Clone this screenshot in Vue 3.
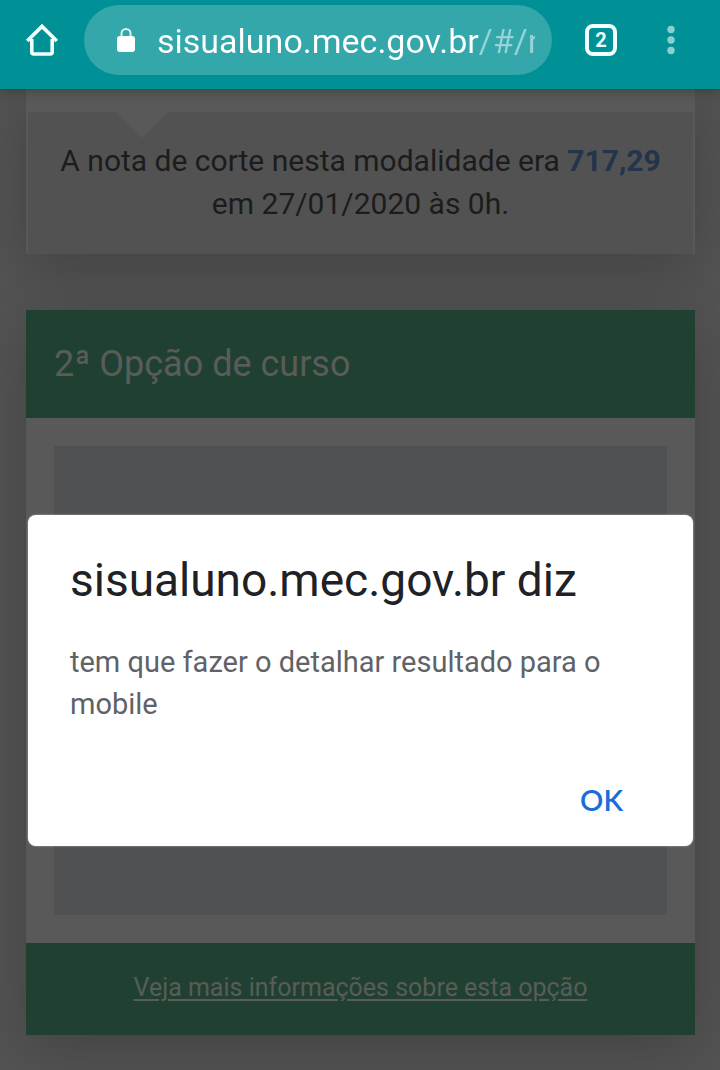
<template>
    <div class="screen">
        <!-- Browser toolbar -->
        <header class="toolbar">
            <button type="button" class="icon-button" aria-label="Página inicial">
                <svg width="34" height="34" viewBox="0 0 34 34" fill="none" stroke="#f2fffe" stroke-width="3.6" stroke-linejoin="round">
                    <path d="M6.8 16V29.5a1.5 1.5 0 0 0 1.5 1.5H25.7a1.5 1.5 0 0 0 1.5-1.5V16"/>
                    <path d="M2.2 18L17 3.4L31.8 18" stroke-linejoin="miter"/>
                </svg>
            </button>

            <div class="address-bar">
                <svg class="lock" width="18" height="24" viewBox="0 0 18 24">
                    <path d="M4.5 9V5.5a4.5 4.5 0 0 1 9 0V9" fill="none" stroke="#d9f1f1" stroke-width="2"/>
                    <rect x="0" y="8" width="18" height="16" rx="3" fill="#ffffff"/>
                </svg>
                <input v-model="url" class="url" type="text" aria-label="Endereço" spellcheck="false">
            </div>

            <button type="button" class="tabs" aria-label="Abas abertas">{{ openTabs }}</button>

            <button type="button" class="icon-button menu" aria-label="Mais opções">
                <svg width="8" height="30" viewBox="0 0 8 30" fill="#8bcfd2">
                    <circle cx="4" cy="4.5" r="3.7"/>
                    <circle cx="4" cy="15" r="3.7"/>
                    <circle cx="4" cy="25.5" r="3.7"/>
                </svg>
            </button>
        </header>

        <main class="content">
            <section class="card">
                <div class="card-tail"></div>
                <p class="cutoff">
                    A nota de corte nesta modalidade era <strong>717,29</strong> em 27/01/2020 às 0h.
                </p>
            </section>

            <section class="card option">
                <h2 class="option-title">2ª Opção de curso</h2>
                <div class="option-body">
                    <div class="placeholder"></div>
                </div>
                <footer class="option-footer">
                    <a href="#">Veja mais informações sobre esta opção</a>
                </footer>
            </section>

            <!-- Alert -->
            <div v-if="alertOpen" class="overlay">
                <div class="dialog" role="alertdialog" aria-labelledby="dialog-title" aria-describedby="dialog-text">
                    <h1 id="dialog-title" class="dialog-title">sisualuno.mec.gov.br diz</h1>
                    <p id="dialog-text" class="dialog-text">tem que fazer o detalhar resultado para o mobile</p>
                    <div class="dialog-actions">
                        <button type="button" class="ok" @click="alertOpen = false">OK</button>
                    </div>
                </div>
            </div>
        </main>
    </div>
</template>

<script setup>
import { ref } from 'vue';

const url = ref('sisualuno.mec.gov.br/#/n');
const openTabs = ref(2);
const alertOpen = ref(true);
</script>

<style>
body {
    margin: 0;
    background: #535353;
}
</style>

<style scoped>
.screen {
    min-height: 100vh;
    font-family: Roboto, sans-serif;
    display: flex;
    flex-direction: column;
}

button {
    border: none;
    background: none;
    padding: 0;
    font-family: inherit;
    cursor: pointer;
}

/* Toolbar */
.toolbar {
    position: relative;
    z-index: 2;
    display: flex;
    align-items: center;
    box-sizing: border-box;
    height: 89px;
    padding: 0 45px 9px 25px;
    background: #009197;
    box-shadow: 0 1px 12px rgba(0, 0, 0, 0.3);
}

.icon-button {
    display: flex;
    align-items: center;
    justify-content: center;
    flex-shrink: 0;
}

.address-bar {
    flex: 1;
    min-width: 0;
    display: flex;
    align-items: center;
    box-sizing: border-box;
    height: 70px;
    margin: 0 33px 0 25px;
    padding: 0 17px 0 33px;
    border-radius: 35px;
    background: #34a7ab;
}

.lock {
    flex-shrink: 0;
    margin-right: 22px;
}

.url {
    flex: 1;
    min-width: 0;
    height: 50px;
    padding: 2px 0 0;
    border: none;
    outline: none;
    font-family: inherit;
    font-size: 34px;
    color: transparent;
    background: linear-gradient(90deg, #ffffff 322px, #96d3d5 322px);
    -webkit-background-clip: text;
    background-clip: text;
}

.tabs {
    box-sizing: border-box;
    width: 32px;
    height: 32px;
    flex-shrink: 0;
    border: 4px solid #f2fffe;
    border-radius: 8px;
    color: #f2fffe;
    font-size: 20px;
    line-height: 24px;
    font-weight: 700;
}

.menu {
    margin-left: 50px;
}

/* Page behind the alert */
.content {
    position: relative;
    flex: 1;
    display: flex;
    flex-direction: column;
    gap: 56px;
    padding: 0 25px 35px 26px;
    overflow: hidden;
}

.card {
    background: #595959;
    box-shadow: 0 14px 56px rgba(0, 0, 0, 0.2);
}

.card-tail {
    height: 23px;
}

.cutoff {
    position: relative;
    margin: 0 2px;
    padding: 27px 24px 29px;
    background: #525252;
    color: #1c1c1c;
    font-size: 30px;
    line-height: 43px;
    text-align: center;
}

.cutoff::before {
    content: '';
    position: absolute;
    top: 0;
    left: 88px;
    border: 26px solid transparent;
    border-top-color: #595959;
    border-bottom: none;
}

.cutoff strong {
    color: #26334d;
}

.option {
    position: relative;
    flex: 1;
    display: flex;
    flex-direction: column;
}

.option-title {
    margin: 0;
    padding: 28px;
    background: #204131;
    color: #595c5a;
    font-size: 36px;
    line-height: 52px;
    font-weight: 400;
}

.option-body {
    flex: 1;
    display: flex;
    padding: 28px;
}

.placeholder {
    flex: 1;
    background: #505153;
}

.option-footer {
    padding: 27px 28px 29px;
    background: #204131;
    font-size: 25px;
    line-height: 36px;
    text-align: center;
}

.option-footer a {
    color: #595c5a;
    text-underline-offset: 3px;
}

/* Alert */
.overlay {
    position: absolute;
    inset: 0;
    z-index: 1;
    padding: 426px 27px 0 28px;
}

.dialog {
    padding: 36px 42px 18px;
    border-radius: 8px;
    background: #ffffff;
    box-shadow: 0 0 2px rgba(255, 255, 255, 0.6);
}

.dialog-title {
    margin: 0;
    color: #202124;
    font-size: 46px;
    line-height: 58px;
    font-weight: 400;
}

.dialog-text {
    margin: 32px 0 47px;
    color: #5f6368;
    font-size: 29px;
    line-height: 42px;
}

.dialog-actions {
    display: flex;
    justify-content: flex-end;
}

.ok {
    padding: 0 28px;
    color: #1a6dd8;
    font-family: Lato, Roboto, sans-serif;
    font-size: 29px;
    line-height: 56px;
    font-weight: 600;
}
</style>
